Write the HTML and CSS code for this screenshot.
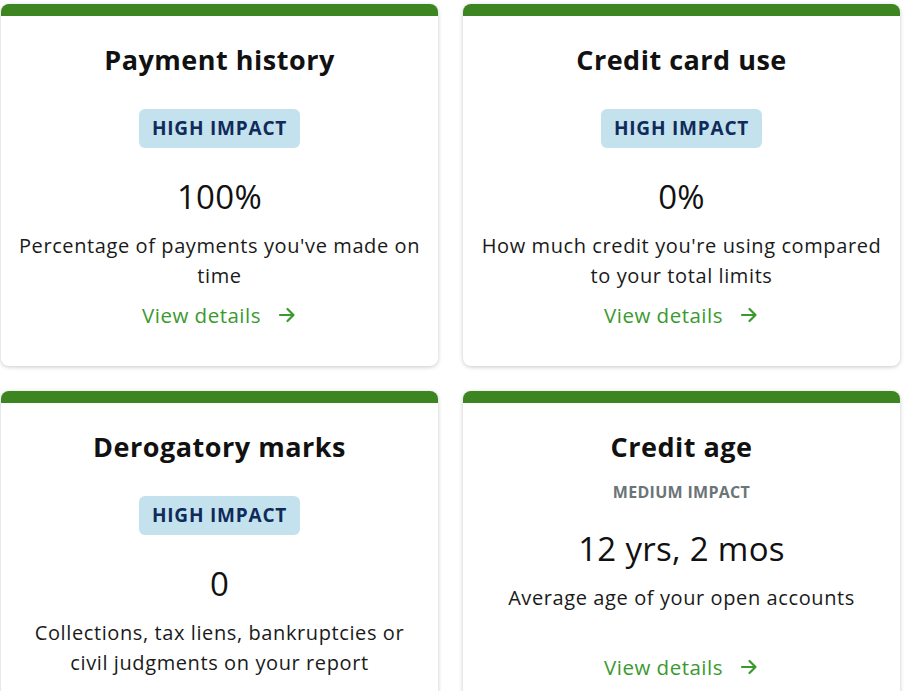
FILE: index.html
```html
<!DOCTYPE html>
<html lang="en">
<head>
<meta charset="utf-8">
<title>Credit factors</title>
<link rel="stylesheet" href="styles.css">
</head>
<body>
<div class="grid">
  <section class="card">
    <h2 class="title">Payment history</h2>
    <span class="badge">HIGH IMPACT</span>
    <div class="value">100%</div>
    <p class="desc">Percentage of payments you've made on time</p>
    <a class="link" href="#">View details <svg class="arrow" viewBox="0 0 20 20" width="20" height="20"><path d="M3 10h13M10.5 4l6 6-6 6" fill="none" stroke="currentColor" stroke-width="2.2" stroke-linecap="round" stroke-linejoin="round"/></svg></a>
  </section>
  <section class="card">
    <h2 class="title">Credit card use</h2>
    <span class="badge">HIGH IMPACT</span>
    <div class="value">0%</div>
    <p class="desc">How much credit you're using compared to your total limits</p>
    <a class="link" href="#">View details <svg class="arrow" viewBox="0 0 20 20" width="20" height="20"><path d="M3 10h13M10.5 4l6 6-6 6" fill="none" stroke="currentColor" stroke-width="2.2" stroke-linecap="round" stroke-linejoin="round"/></svg></a>
  </section>
  <section class="card">
    <h2 class="title">Derogatory marks</h2>
    <span class="badge">HIGH IMPACT</span>
    <div class="value">0</div>
    <p class="desc">Collections, tax liens, bankruptcies or civil judgments on your report</p>
    <a class="link" href="#">View details <svg class="arrow" viewBox="0 0 20 20" width="20" height="20"><path d="M3 10h13M10.5 4l6 6-6 6" fill="none" stroke="currentColor" stroke-width="2.2" stroke-linecap="round" stroke-linejoin="round"/></svg></a>
  </section>
  <section class="card">
    <h2 class="title">Credit age</h2>
    <span class="impact">MEDIUM IMPACT</span>
    <div class="value value-sm">12 yrs, 2 mos</div>
    <p class="desc">Average age of your open accounts</p>
    <a class="link" href="#">View details <svg class="arrow" viewBox="0 0 20 20" width="20" height="20"><path d="M3 10h13M10.5 4l6 6-6 6" fill="none" stroke="currentColor" stroke-width="2.2" stroke-linecap="round" stroke-linejoin="round"/></svg></a>
  </section>
</div>
</body>
</html>
```
FILE: styles.css
```css
html, body {
  margin: 0;
  padding: 0;
  background: #ffffff;
  overflow: hidden;
}
body {
  font-family: "Open Sans", "Liberation Sans", sans-serif;
  color: #141414;
}
.grid {
  display: grid;
  grid-template-columns: 437px 437px;
  column-gap: 25px;
  row-gap: 25px;
  padding: 4px 0 0 1px;
  align-items: start;
}
.card {
  display: flex;
  flex-direction: column;
  align-items: center;
  text-align: center;
  background: #fff;
  border-top: 12px solid #3c8520;
  border-radius: 8px;
  box-shadow: 0 1px 4px rgba(0, 0, 0, 0.22);
  padding: 28px 14px 36px;
}
.title {
  margin: 0;
  font-size: 27px;
  line-height: 32px;
  font-weight: 700;
  color: #111;
  letter-spacing: 0.5px;
}
.badge {
  margin-top: 33px;
  background: #c4e2ed;
  color: #102b5a;
  font-size: 19px;
  font-weight: 700;
  line-height: 39px;
  letter-spacing: 0.8px;
  padding: 0 13px;
  border-radius: 6px;
}
.impact {
  margin-top: 19px;
  color: #6b7477;
  font-size: 16px;
  font-weight: 700;
  line-height: 20px;
  letter-spacing: 0.3px;
}
.value {
  margin-top: 31px;
  font-size: 33px;
  line-height: 36px;
  font-weight: 400;
  color: #111;
  letter-spacing: 0.3px;
}
.value-sm {
  margin-top: 29px;
}
.desc {
  margin: 16px 0 0;
  font-size: 20px;
  line-height: 30px;
  letter-spacing: 0.6px;
  min-height: 60px;
  color: #1a1a1a;
}
.link {
  margin-top: 9px;
  display: inline-flex;
  align-items: center;
  gap: 16px;
  font-size: 20.5px;
  line-height: 30px;
  letter-spacing: 0.5px;
  color: #3a9a2e;
  text-decoration: none;
}
.arrow {
  display: block;
  color: #3a9a2e;
}
```
